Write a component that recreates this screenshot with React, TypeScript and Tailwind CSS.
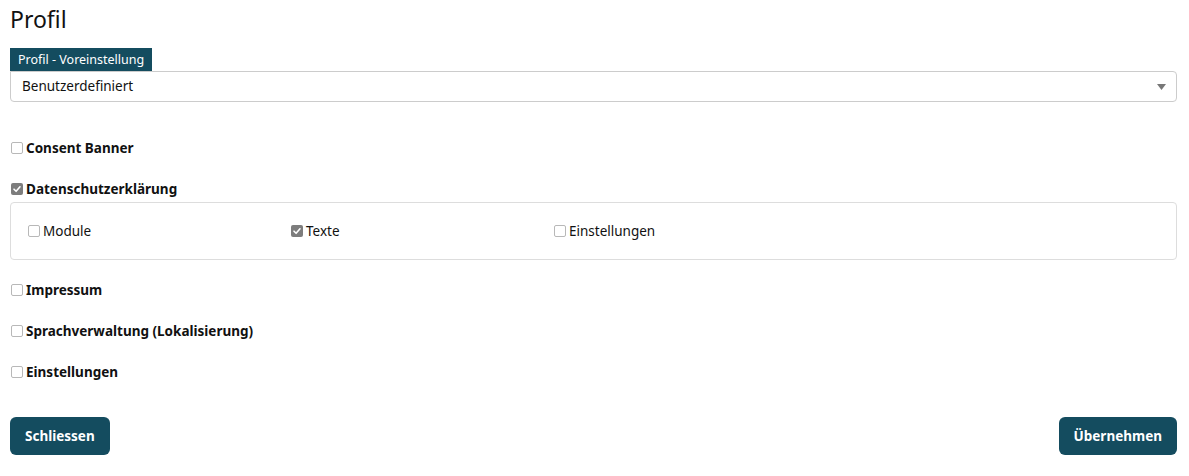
import React from 'react';

const Check: React.FC<{ checked?: boolean }> = ({ checked }) => (
    checked ? (
        <span className="w-[12px] h-[12px] rounded-[2px] bg-[#7d7d7d] flex items-center justify-center shrink-0">
            <svg width="10" height="10" viewBox="0 0 10 10">
                <path d="M2 5.2 L4.1 7.3 L8 2.8" fill="none" stroke="#fff" strokeWidth="1.6" strokeLinecap="round" strokeLinejoin="round" />
            </svg>
        </span>
    ) : (
        <span className="w-[12px] h-[12px] rounded-[2px] border border-[#b8b8b8] bg-white shrink-0" />
    )
);

const Row: React.FC<{ label: string; checked?: boolean; className?: string }> = ({ label, checked, className }) => (
    <div className={`flex items-center h-[20px] pl-[1px] ${className ?? ''}`}>
        <Check checked={checked} />
        <span className="ml-[3px] font-bold text-[13.5px] leading-[20px] text-[#111]">{label}</span>
    </div>
);

const SubItem: React.FC<{ label: string; checked?: boolean }> = ({ label, checked }) => (
    <div className="flex items-center w-[263px]">
        <Check checked={checked} />
        <span className="ml-[3px] text-[13.5px] leading-[20px] text-[#111]">{label}</span>
    </div>
);

const App: React.FC = () => {
    return (
        <div className="bg-white min-h-screen pl-[10px] pr-[12px] font-['Noto_Sans','Open_Sans',sans-serif] text-[#111]">
            <h1 className="text-[23px] leading-[28px] pt-[5px] text-[#111]">Profil</h1>

            {/* Profil preset */}
            <div className="mt-[13px]">
                <div className="inline-block bg-[#144c5f] text-white text-[12.5px] leading-[23px] h-[23px] px-[8px]">
                    Profil - Voreinstellung
                </div>
                <div className="h-[31px] border border-[#cccccc] rounded-[4px] rounded-tl-none flex items-center justify-between px-[11px]">
                    <span className="text-[13.5px]">Benutzerdefiniert</span>
                    <svg width="9" height="6" viewBox="0 0 9 6" className="mr-[-1px]">
                        <path d="M0 0 H9 L4.5 6 Z" fill="#777" />
                    </svg>
                </div>
            </div>

            <Row label="Consent Banner" className="mt-[36px]" />
            <Row label="Datenschutzerklärung" checked className="mt-[21px]" />

            <div className="mt-[3px] h-[58px] border border-[#dddddd] rounded-[4px] flex items-center pl-[17px]">
                <SubItem label="Module" />
                <SubItem label="Texte" checked />
                <SubItem label="Einstellungen" />
            </div>

            <Row label="Impressum" className="mt-[20px]" />
            <Row label="Sprachverwaltung (Lokalisierung)" className="mt-[21px]" />
            <Row label="Einstellungen" className="mt-[21px]" />

            <div className="mt-[35px] flex justify-between">
                <button className="h-[38px] px-[15px] bg-[#144c5f] text-white font-bold text-[13.5px] rounded-[6px]">
                    Schliessen
                </button>
                <button className="h-[38px] px-[15px] bg-[#144c5f] text-white font-bold text-[13.5px] rounded-[6px]">
                    Übernehmen
                </button>
            </div>
        </div>
    );
};

export default App;
